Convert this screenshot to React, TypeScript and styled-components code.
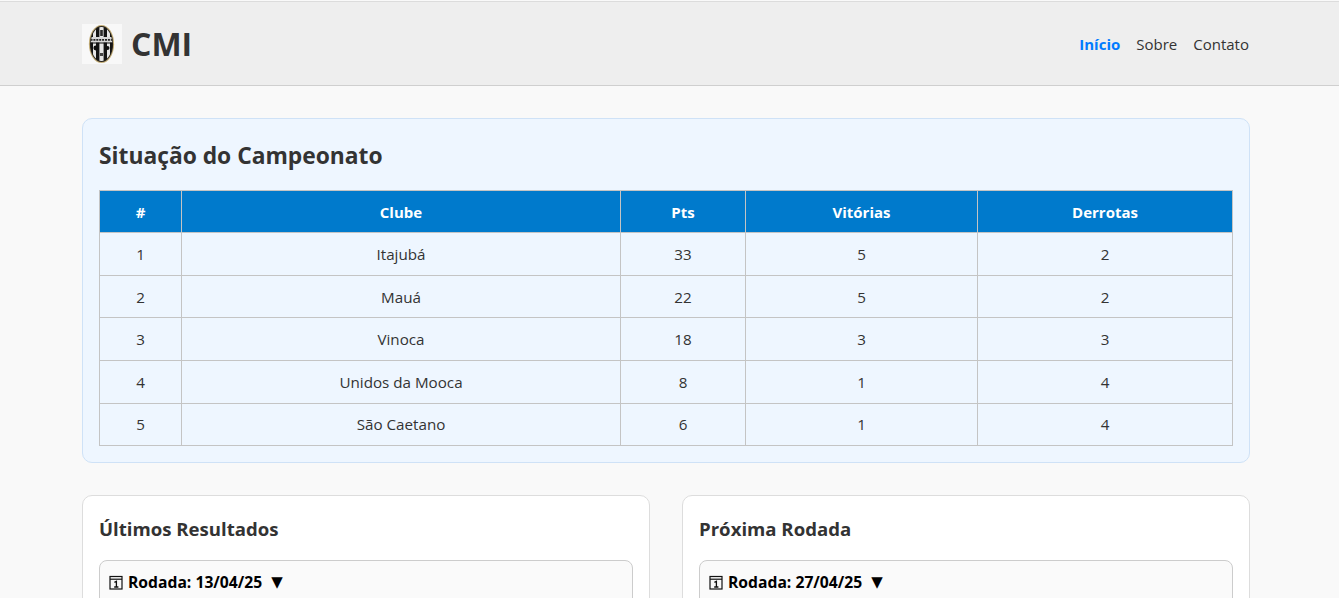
import React from "react";
import styled, { createGlobalStyle } from "styled-components";

const Global = createGlobalStyle`
  html, body { margin: 0; padding: 0; background: #f9f9f9; overflow: hidden; height: 598px; }
  body { font-family: "Open Sans", "Noto Sans", "Liberation Sans", sans-serif; color: #333; }
  * { box-sizing: border-box; }
`;

const Page = styled.div`
  width: 1339px;
  height: 598px;
  overflow: hidden;
  padding-top: 1px;
`;

const Header = styled.header`
  height: 85px;
  background: #eeeeee;
  border-top: 1px solid #dcdcdc;
  border-bottom: 1px solid #cfcfcf;
  padding: 1px 90px 0 82px;
  display: flex;
  align-items: center;
  justify-content: space-between;
`;

const Brand = styled.div`
  display: flex;
  align-items: center;
  gap: 9px;
`;

const BrandName = styled.h1`
  margin: 0;
  font-size: 32px;
  line-height: 40px;
  font-weight: 700;
  color: #333;
`;

const Nav = styled.nav`
  display: flex;
  gap: 16px;
  margin-top: -1px;
`;

const NavLink = styled.a<{ $active?: boolean }>`
  font-size: 15px;
  line-height: 20px;
  color: ${(p) => (p.$active ? "#007bff" : "#333")};
  font-weight: ${(p) => (p.$active ? 700 : 400)};
`;

const Main = styled.main`
  width: 1168px;
  margin-left: 82px;
  padding-top: 32px;
  display: flex;
  flex-direction: column;
  gap: 32px;
`;

const StandingsPanel = styled.section`
  height: 345px;
  background: #eef6ff;
  border: 1px solid #cfe2f7;
  border-radius: 10px;
  padding: 16px;
`;

const SectionTitle = styled.h2<{ $size?: number; $height?: number }>`
  margin: 0;
  font-size: ${(p) => p.$size ?? 22.8}px;
  line-height: ${(p) => p.$height ?? 42}px;
  font-weight: 700;
  color: #333;
`;

const Table = styled.table`
  width: 1134px;
  margin-top: 13.3px;
  border-collapse: collapse;
  table-layout: fixed;
  font-size: 15.2px;
`;

const Th = styled.th<{ $w: number }>`
  width: ${(p) => p.$w}px;
  height: 42px;
  background: #007acc;
  color: #fff;
  border: 1px solid #c4c4c4;
  font-weight: 700;
  font-size: 15px;
  padding: 0;
`;

const Td = styled.td`
  height: 42.6px;
  border: 1px solid #c4c4c4;
  text-align: center;
  color: #333;
  padding: 0;
`;

const Columns = styled.div`
  display: grid;
  grid-template-columns: 568px 568px;
  gap: 32px;
`;

const Card = styled.section`
  height: 200px;
  background: #fff;
  border: 1px solid #dddddd;
  border-radius: 10px;
  padding: 16px;
`;

const RoundBox = styled.div`
  margin-top: 14px;
  height: 120px;
  background: #fafafa;
  border: 1px solid #cccccc;
  border-radius: 8px;
  padding: 11px 9px;
`;

const RoundSummary = styled.div`
  display: flex;
  align-items: center;
  gap: 5px;
  font-size: 15.7px;
  line-height: 20px;
  font-weight: 700;
  color: #000;
`;

const Arrow = styled.span`
  margin-left: 4px;
  font-size: 15px;
  font-family: "DejaVu Sans", sans-serif;
`;

const Logo = () => (
  <svg width="40" height="40" viewBox="0 0 40 40" aria-label="CMI">
    <defs>
      <clipPath id="shield">
        <ellipse cx="19.5" cy="20" rx="10.8" ry="17" />
      </clipPath>
    </defs>
    <rect width="40" height="40" fill="#f8f8f8" />
    <ellipse cx="19.5" cy="20" rx="12.6" ry="19" fill="#c4ae78" />
    <ellipse cx="19.5" cy="20" rx="11.6" ry="18" fill="#2a2620" />
    <g clipPath="url(#shield)">
      <rect x="8" y="2" width="23" height="36" fill="#141414" />
      <path d="M11 2h3v36h-3zM17.4 2h4.2v36h-4.2zM25 2h3v36h-3z" fill="#e6e6e6" />
      <rect x="18.2" y="6" width="2.6" height="6" fill="#2a2a2a" />
      <rect x="8" y="13" width="23" height="5.6" fill="#d8d8d8" />
      <path d="M8.5 15.8h22" stroke="#222" strokeWidth="1.8" strokeDasharray="2 0.9" />
      <path d="M8 19h23" stroke="#111" strokeWidth="1" />
      <circle cx="13.8" cy="24" r="2.4" fill="#111" />
      <circle cx="25.6" cy="24" r="1.9" fill="#111" />
      <rect x="17.9" y="29" width="3.2" height="3" fill="#444" />
    </g>
  </svg>
);

const CalendarIcon = () => (
  <svg width="14" height="15" viewBox="0 0 14 15" fill="none" stroke="#111">
    <rect x="1" y="1.5" width="12" height="12.5" strokeWidth="1.2" />
    <path d="M1 4.2h12" strokeWidth="1.2" />
    <path d="M5.4 7.4 7.4 6.4V12M5.2 12h4.2" strokeWidth="1.3" />
  </svg>
);

const widths = [82, 439, 125, 232, 255];
const heads = ["#", "Clube", "Pts", "Vitórias", "Derrotas"];
const rows: [number, string, number, number, number][] = [
  [1, "Itajubá", 33, 5, 2],
  [2, "Mauá", 22, 5, 2],
  [3, "Vinoca", 18, 3, 3],
  [4, "Unidos da Mooca", 8, 1, 4],
  [5, "São Caetano", 6, 1, 4],
];

export default function App() {
  return (
    <Page>
      <Global />
      <Header>
        <Brand>
          <Logo />
          <BrandName>CMI</BrandName>
        </Brand>
        <Nav>
          <NavLink $active>Início</NavLink>
          <NavLink>Sobre</NavLink>
          <NavLink>Contato</NavLink>
        </Nav>
      </Header>
      <Main>
        <StandingsPanel>
          <SectionTitle>Situação do Campeonato</SectionTitle>
          <Table>
            <thead>
              <tr>
                {heads.map((h, i) => (
                  <Th key={h} $w={widths[i]}>{h}</Th>
                ))}
              </tr>
            </thead>
            <tbody>
              {rows.map((r) => (
                <tr key={r[0]}>
                  {r.map((c, i) => (
                    <Td key={i}>{c}</Td>
                  ))}
                </tr>
              ))}
            </tbody>
          </Table>
        </StandingsPanel>
        <Columns>
          <Card>
            <SectionTitle $size={18.6} $height={34}>Últimos Resultados</SectionTitle>
            <RoundBox>
              <RoundSummary>
                <CalendarIcon />
                Rodada: 13/04/25
                <Arrow>▼</Arrow>
              </RoundSummary>
            </RoundBox>
          </Card>
          <Card>
            <SectionTitle $size={18.6} $height={34}>Próxima Rodada</SectionTitle>
            <RoundBox>
              <RoundSummary>
                <CalendarIcon />
                Rodada: 27/04/25
                <Arrow>▼</Arrow>
              </RoundSummary>
            </RoundBox>
          </Card>
        </Columns>
      </Main>
    </Page>
  );
}
